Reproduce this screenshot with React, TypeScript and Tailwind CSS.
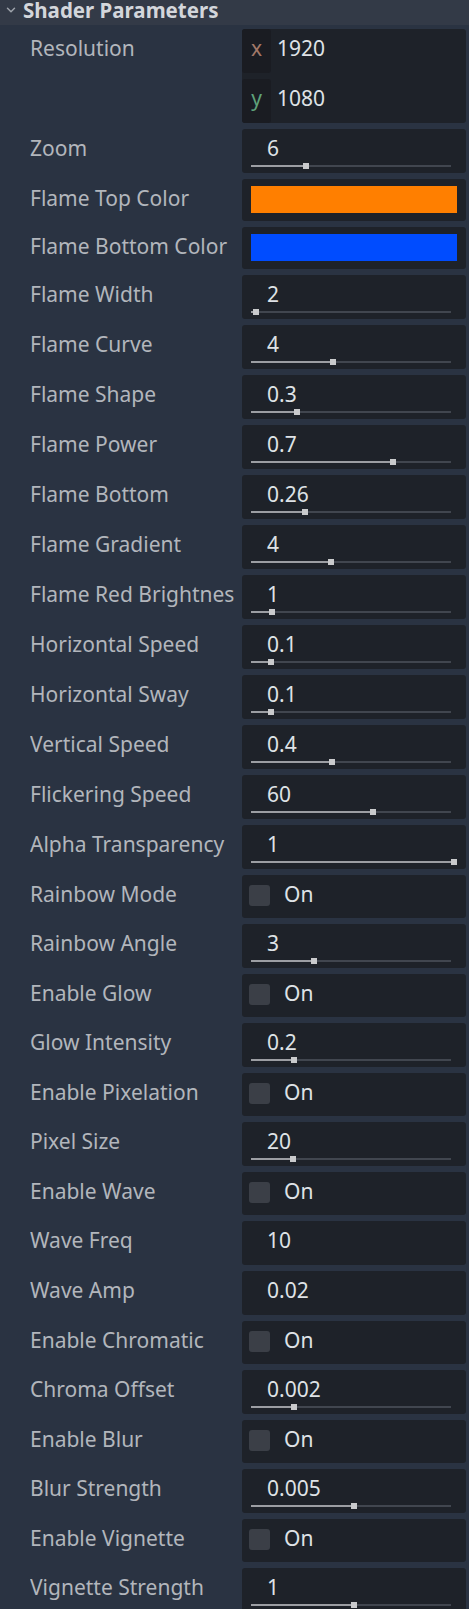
import { ChevronDown } from 'lucide-react';

type Row =
  | { label: string; kind: 'slider'; value: string; pos: number }
  | { label: string; kind: 'num'; value: string }
  | { label: string; kind: 'bool' }
  | { label: string; kind: 'color'; color: string };

const rows: Row[] = [
  { label: 'Zoom', kind: 'slider', value: '6', pos: 52 },
  { label: 'Flame Top Color', kind: 'color', color: '#ff7f00' },
  { label: 'Flame Bottom Color', kind: 'color', color: '#004cff' },
  { label: 'Flame Width', kind: 'slider', value: '2', pos: 2 },
  { label: 'Flame Curve', kind: 'slider', value: '4', pos: 79 },
  { label: 'Flame Shape', kind: 'slider', value: '0.3', pos: 43 },
  { label: 'Flame Power', kind: 'slider', value: '0.7', pos: 139 },
  { label: 'Flame Bottom', kind: 'slider', value: '0.26', pos: 51 },
  { label: 'Flame Gradient', kind: 'slider', value: '4', pos: 77 },
  { label: 'Flame Red Brightnes', kind: 'slider', value: '1', pos: 18 },
  { label: 'Horizontal Speed', kind: 'slider', value: '0.1', pos: 17 },
  { label: 'Horizontal Sway', kind: 'slider', value: '0.1', pos: 17 },
  { label: 'Vertical Speed', kind: 'slider', value: '0.4', pos: 78 },
  { label: 'Flickering Speed', kind: 'slider', value: '60', pos: 119 },
  { label: 'Alpha Transparency', kind: 'slider', value: '1', pos: 200 },
  { label: 'Rainbow Mode', kind: 'bool' },
  { label: 'Rainbow Angle', kind: 'slider', value: '3', pos: 60 },
  { label: 'Enable Glow', kind: 'bool' },
  { label: 'Glow Intensity', kind: 'slider', value: '0.2', pos: 40 },
  { label: 'Enable Pixelation', kind: 'bool' },
  { label: 'Pixel Size', kind: 'slider', value: '20', pos: 39 },
  { label: 'Enable Wave', kind: 'bool' },
  { label: 'Wave Freq', kind: 'num', value: '10' },
  { label: 'Wave Amp', kind: 'num', value: '0.02' },
  { label: 'Enable Chromatic', kind: 'bool' },
  { label: 'Chroma Offset', kind: 'slider', value: '0.002', pos: 40 },
  { label: 'Enable Blur', kind: 'bool' },
  { label: 'Blur Strength', kind: 'slider', value: '0.005', pos: 100 },
  { label: 'Enable Vignette', kind: 'bool' },
  { label: 'Vignette Strength', kind: 'slider', value: '1', pos: 100 },
];

const Label = ({ text }: { text: string }) => (
  <div className="w-[212px] shrink-0 pt-[5px] leading-[28px] text-[#b2b6bc] whitespace-nowrap overflow-hidden">
    {text}
  </div>
);

const Value = ({ row }: { row: Row }) => {
  if (row.kind === 'color') {
    return (
      <div className="flex-1 h-[42px] rounded-[3px] bg-[#1e2229] pl-[9px] pr-[9px] pt-[7px]">
        <div className="h-[27px]" style={{ backgroundColor: row.color }} />
      </div>
    );
  }
  if (row.kind === 'bool') {
    return (
      <div className="flex-1 h-[43px] rounded-[3px] bg-[#1e2229] flex items-start pl-[7px] pt-[10px]">
        <div className="w-[21px] h-[21px] rounded-[3px] bg-[#3b3f47]" />
        <span className="ml-[14px] -mt-[5px] leading-[28px] text-[#dfe2e6]">On</span>
      </div>
    );
  }
  return (
    <div className="relative flex-1 h-[44px] rounded-[3px] bg-[#1e2229] pl-[25px] pt-[5px]">
      <div className="leading-[28px] text-[#dfe2e6]">{row.value}</div>
      {row.kind === 'slider' && (
        <div className="absolute left-[9px] top-[36px] w-[200px] h-[2px] bg-[#41464f]">
          <div className="h-full bg-[#9c9ea3]" style={{ width: row.pos }} />
          <div
            className="absolute top-[-2px] w-[6px] h-[6px] bg-[#c9cacc]"
            style={{ left: row.pos }}
          />
        </div>
      )}
    </div>
  );
};

export default function App() {
  return (
    <div className="w-[469px] h-[1609px] overflow-hidden bg-[#2a3342] font-['Noto_Sans',sans-serif] text-[21px]">
      {/* category header */}
      <div className="h-[25px] bg-[#333a47] flex items-start">
        <ChevronDown className="ml-[4px] mt-[3px] text-[#9ea3ab]" size={14} strokeWidth={2.5} />
        <span className="ml-[5px] font-bold text-[20.5px] text-[#d3d6db] leading-[20px]">Shader Parameters</span>
      </div>

      <div className="pt-[4px] pl-[30px] pr-[3px] flex flex-col gap-[6px]">
        {/* Resolution: vector2 */}
        <div className="flex items-start">
          <Label text="Resolution" />
          <div className="flex-1 h-[94px] rounded-[3px] bg-[#1e2229] flex flex-col gap-[6px]">
            <div className="flex h-[44px]">
              <div className="w-[29px] h-[44px] rounded-[3px] bg-[#1a1c22] text-[#a27868] text-center pt-[5px] leading-[28px]">x</div>
              <div className="ml-[6px] pt-[5px] leading-[28px] text-[#dfe2e6]">1920</div>
            </div>
            <div className="flex h-[44px]">
              <div className="w-[29px] h-[44px] rounded-[3px] bg-[#1a1c22] text-[#5fa27a] text-center pt-[5px] leading-[28px]">y</div>
              <div className="ml-[6px] pt-[5px] leading-[28px] text-[#dfe2e6]">1080</div>
            </div>
          </div>
        </div>

        {rows.map((r) => (
          <div key={r.label} className="flex items-start">
            <Label text={r.label} />
            <Value row={r} />
          </div>
        ))}
      </div>
    </div>
  );
}
